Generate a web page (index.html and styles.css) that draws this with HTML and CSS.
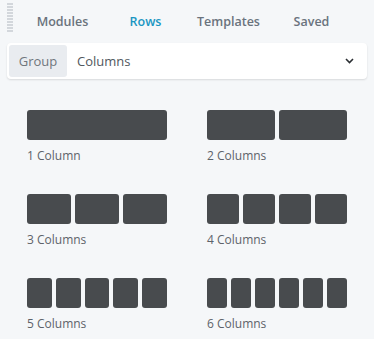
FILE: index.html
```html
<!DOCTYPE html>
<html>
<head>
<meta charset="utf-8">
<link rel="stylesheet" href="styles.css">
</head>
<body>
<div class="panel">
  <div class="header">
    <div class="handle"></div>
    <div class="tabs">
      <div class="tab">Modules</div>
      <div class="tab active">Rows</div>
      <div class="tab">Templates</div>
      <div class="tab">Saved</div>
    </div>
  </div>
  <div class="select">
    <div class="group">Group</div>
    <div class="value">Columns</div>
    <svg class="chev" width="9" height="6" viewBox="0 0 9 6"><path d="M1 1l3.5 3.5L8 1" fill="none" stroke="#2b2f33" stroke-width="1.6"/></svg>
  </div>
  <div class="grid">
    <div class="item"><div class="bars"><span></span></div><div class="label">1 Column</div></div>
    <div class="item"><div class="bars"><span></span><span></span></div><div class="label">2 Columns</div></div>
    <div class="item"><div class="bars"><span></span><span></span><span></span></div><div class="label">3 Columns</div></div>
    <div class="item"><div class="bars"><span></span><span></span><span></span><span></span></div><div class="label">4 Columns</div></div>
    <div class="item"><div class="bars"><span></span><span></span><span></span><span></span><span></span></div><div class="label">5 Columns</div></div>
    <div class="item"><div class="bars"><span></span><span></span><span></span><span></span><span></span><span></span></div><div class="label">6 Columns</div></div>
  </div>
</div>
</body>
</html>
```

FILE: styles.css
```css
html, body {
  margin: 0;
  padding: 0;
  background: #f5f7f9;
}
.panel {
  width: 374px;
  height: 339px;
  font-family: "Open Sans", "Noto Sans", sans-serif;
  position: relative;
}
.header {
  height: 43px;
  position: relative;
}
.handle {
  position: absolute;
  left: 7px;
  top: 3px;
  width: 6px;
  height: 30px;
  background: repeating-linear-gradient(to bottom, #d3d7dc 0, #d3d7dc 2px, transparent 2px, transparent 3px);
}
.tabs {
  display: grid;
  grid-template-columns: repeat(4, 1fr);
  padding: 0 21px;
  height: 43px;
  align-items: center;
}
.tab {
  text-align: center;
  font-size: 12.5px;
  font-weight: 600;
  color: #6a737d;
  line-height: 16px;
  margin-top: 0;
}
.tab.active {
  color: #1a96c2;
}
.select {
  margin: 0 7px;
  height: 36px;
  background: #fff;
  border-radius: 4px;
  box-shadow: 0 1px 2px rgba(0,0,0,0.12);
  display: flex;
  align-items: center;
  padding: 2px;
  box-sizing: border-box;
}
.group {
  width: 58px;
  height: 32px;
  background: #e9ecf0;
  border-radius: 3px;
  display: flex;
  align-items: center;
  justify-content: center;
  font-size: 13px;
  color: #70767d;
}
.value {
  flex: 1;
  padding-left: 10px;
  font-size: 13px;
  color: #51575e;
}
.chev {
  margin-right: 11px;
}
.grid {
  display: grid;
  grid-template-columns: 140px 140px;
  column-gap: 40px;
  row-gap: 30px;
  padding: 31px 0 0 27px;
}
.bars {
  display: flex;
  gap: 4px;
  height: 30px;
}
.bars span {
  flex: 1;
  background: #484b4e;
  border-radius: 3px;
}
.label {
  margin-top: 8px;
  font-size: 12px;
  line-height: 16px;
  color: #5d636a;
}
```
